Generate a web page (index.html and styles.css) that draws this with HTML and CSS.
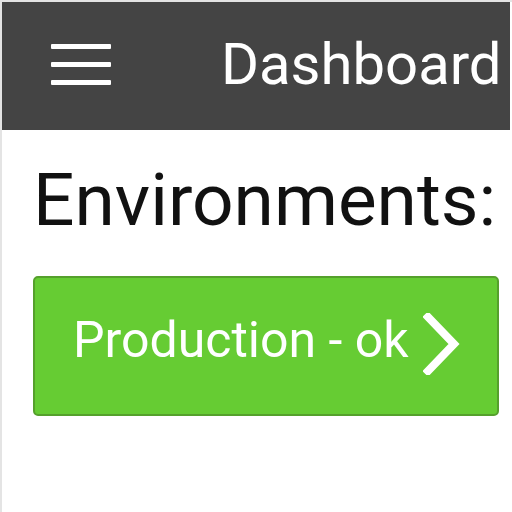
FILE: index.html
```html
<!DOCTYPE html>
<html lang="en">
<head>
  <meta charset="UTF-8" />
  <title>Dashboard</title>
  <link rel="stylesheet" href="styles.css">
</head>
<body>
  <div class="screen">
    <header class="topbar">
      <button class="menu-btn" aria-label="Menu">
        <span></span>
        <span></span>
        <span></span>
      </button>
      <h1 class="title">Dashboard</h1>
    </header>

    <main class="content">
      <h2 class="section-title">Environments:</h2>
      <a class="env-btn" href="#">
        <span class="env-label">Production - ok</span>
        <svg class="chevron" width="38" height="62" viewBox="0 0 38 62">
          <path d="M5 4 L31 31 L5 58" fill="none" stroke="#fff" stroke-width="8" stroke-linecap="square" />
        </svg>
      </a>
    </main>
  </div>
</body>
</html>
```

FILE: styles.css
```css
* {
  box-sizing: border-box;
}

body {
  margin: 0;
  font-family: Roboto, "Liberation Sans", sans-serif;
  background: #fff;
}

.screen {
  width: 512px;
  height: 512px;
  border-left: 2px solid #e4e4e4;
  border-top: 2px solid #e4e4e4;
  overflow: hidden;
}

.topbar {
  height: 128px;
  width: 508px;
  background: #444444;
  display: flex;
  align-items: center;
  color: #fff;
}

.menu-btn {
  display: flex;
  flex-direction: column;
  gap: 13px;
  margin: 0 0 4px 49px;
  padding: 0;
  border: none;
  background: none;
  width: 60px;
}

.menu-btn span {
  display: block;
  height: 5px;
  background: #fff;
  border-radius: 1px;
}

.title {
  margin: 0 0 4px 110px;
  font-size: 58px;
  font-weight: 400;
  white-space: nowrap;
}

.content {
  padding: 28px 13px 0 31px;
}

.section-title {
  margin: 0;
  font-size: 73px;
  font-weight: 400;
  line-height: 84px;
  color: #111;
  white-space: nowrap;
}

.env-btn {
  margin-top: 34px;
  height: 140px;
  display: flex;
  align-items: center;
  gap: 14px;
  padding: 0 0 12px 38px;
  background: #66cc33;
  border: 2px solid #55a02c;
  border-radius: 5px;
  color: #fff;
  text-decoration: none;
}

.env-label {
  font-size: 50px;
  white-space: nowrap;
}

.chevron {
  margin-top: 8px;
}
```
